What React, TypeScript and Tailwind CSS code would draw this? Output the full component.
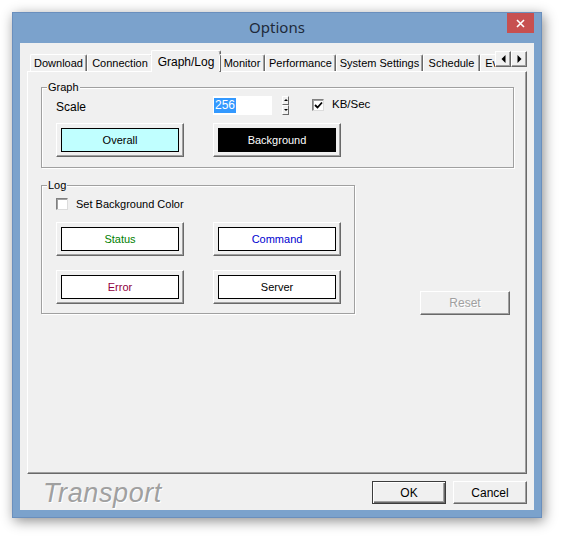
import React from 'react';

const raised =
  'border border-t-white border-l-white border-r-[#696969] border-b-[#696969] shadow-[inset_-1px_-1px_0_#a0a0a0]';

const tabs = [
  { label: 'Download', w: 'w-[57px]' },
  { label: 'Connection', w: 'w-[66px]' },
  { label: 'Graph/Log', w: 'w-[70px]', active: true },
  { label: 'Monitor', w: 'w-[46px]' },
  { label: 'Performance', w: 'w-[71px]' },
  { label: 'System Settings', w: 'w-[87px]' },
  { label: 'Schedule', w: 'w-[57px]' },
  { label: 'Events', w: 'w-[44px]' },
];

function GroupBox({ label, className, children }: { label: string; className: string; children: React.ReactNode }) {
  return (
    <div className={`relative border border-[#a0a0a0] shadow-[inset_1px_1px_0_#fff,1px_1px_0_#fff] ${className}`}>
      {/* caption sits on the etched line */}
      <span className="absolute -top-[8px] left-[5px] bg-[#f0f0f0] px-[1px] leading-[14px]">{label}</span>
      {children}
    </div>
  );
}

function ColorButton({ label, inner }: { label: string; inner: string }) {
  return (
    <button className={`w-[128px] h-[34px] bg-[#f0f0f0] p-[4px] ${raised}`}>
      <div className={`h-full border border-black flex items-center justify-center ${inner}`}>{label}</div>
    </button>
  );
}

function CheckBox({ checked }: { checked?: boolean }) {
  return (
    <div className="w-[12px] h-[12px] bg-white border border-t-[#808080] border-l-[#808080] border-r-[#dcdcdc] border-b-[#dcdcdc] shadow-[inset_1px_1px_0_#a0a0a0] flex items-center justify-center">
      {checked && (
        <svg width="9" height="9" viewBox="0 0 9 9">
          <path d="M1 4 L3.5 6.5 L8 1.5" stroke="#000" strokeWidth="1.8" fill="none" />
        </svg>
      )}
    </div>
  );
}

function Arrow({ dir }: { dir: 'left' | 'right' }) {
  return (
    <div className={`w-[16px] h-[16px] bg-[#f0f0f0] flex items-center justify-center ${raised}`}>
      <svg width="5" height="8" viewBox="0 0 5 8">
        <path d={dir === 'left' ? 'M4.5 0 L0.5 4 L4.5 8 Z' : 'M0.5 0 L4.5 4 L0.5 8 Z'} fill="#000" />
      </svg>
    </div>
  );
}

export default function App() {
  return (
    <div className="w-[563px] h-[538px] bg-white p-[12px] text-[11px] text-black" style={{ fontFamily: '"Liberation Sans", Arial, sans-serif' }}>
      <div className="w-[530px] h-[506px] bg-[#7ba2cc] border border-[#6a8fbd] shadow-[2px_3px_12px_rgba(0,0,0,0.45)] flex flex-col px-[7px] pb-[7px]">
        {/* Title bar */}
        <div className="h-[30px] relative flex items-center justify-center">
          <span className="text-[15px] text-[#1e2a3a] pb-[2px]" style={{ fontFamily: '"Noto Sans", "Open Sans", sans-serif' }}>
            Options
          </span>
          <div className="absolute top-0 right-0 w-[27px] h-[20px] bg-[#c75050] flex items-center justify-center">
            <svg width="9" height="9" viewBox="0 0 9 9">
              <path d="M1 1 L8 8 M8 1 L1 8" stroke="#fff" strokeWidth="1.6" />
            </svg>
          </div>
        </div>

        {/* Client area */}
        <div className="flex-1 bg-[#f0f0f0] px-[7px] pt-[7px] flex flex-col">
          {/* Tab strip */}
          <div className="relative z-10 flex items-start h-[22px]">
            <div className="w-[468px] h-[22px] overflow-hidden flex items-end pl-[3px]">
              {tabs.map((t) =>
                t.active ? (
                  <div
                    key={t.label}
                    className={`${t.w} shrink-0 -mx-[2px] h-[22px] bg-[#f0f0f0] border-t border-l border-white border-r border-r-[#696969] shadow-[inset_-1px_0_0_#a0a0a0] rounded-t-[2px] flex justify-center pt-[2px] text-[12px]`}
                  >
                    {t.label}
                  </div>
                ) : (
                  <div
                    key={t.label}
                    className={`${t.w} shrink-0 h-[17px] mb-[1px] border-t border-l border-white border-r border-r-[#696969] shadow-[inset_-1px_0_0_#a0a0a0] rounded-t-[2px] flex justify-center items-center whitespace-nowrap overflow-hidden`}
                  >
                    {t.label}
                  </div>
                )
              )}
            </div>
            <div className="flex mt-[1px]">
              <Arrow dir="left" />
              <Arrow dir="right" />
            </div>
          </div>

          {/* Tab page */}
          <div className="-mt-[1px] h-[403px] w-[500px] border border-t-white border-l-white border-r-[#696969] border-b-[#696969] shadow-[inset_-1px_-1px_0_#a0a0a0] pl-[13px] pt-[15px] flex flex-col">
            <GroupBox label="Graph" className="w-[473px] h-[81px] pl-[14px] pt-[7px]">
              <div className="grid grid-cols-[157px_auto] gap-y-[8px]">
                <div className="h-[20px] flex items-center pt-[3px] text-[12px]">Scale</div>
                <div className="h-[20px] flex items-center">
                  <div className="w-[59px] h-[19px] bg-white flex items-center pl-[1px]">
                    <span className="bg-[#3399ff] text-white px-[1px] leading-[15px] text-[12px]">256</span>
                  </div>
                  <div className="ml-[10px] w-[7px] h-[19px] flex flex-col">
                    <div className="flex-1 border border-t-white border-l-white border-r-[#696969] border-b-[#696969] flex items-center justify-center">
                      <div className="w-0 h-0 border-l-[2px] border-r-[2px] border-b-[2px] border-l-transparent border-r-transparent border-b-black" />
                    </div>
                    <div className="flex-1 border border-t-white border-l-white border-r-[#696969] border-b-[#696969] flex items-center justify-center">
                      <div className="w-0 h-0 border-l-[2px] border-r-[2px] border-t-[2px] border-l-transparent border-r-transparent border-t-black" />
                    </div>
                  </div>
                  <div className="ml-[23px]">
                    <CheckBox checked />
                  </div>
                  <span className="ml-[8px] text-[11.5px]">KB/Sec</span>
                </div>
                <ColorButton label="Overall" inner="bg-[#c0ffff] text-black" />
                <ColorButton label="Background" inner="bg-black text-white" />
              </div>
            </GroupBox>

            <div className="flex items-start mt-[17px]">
              <GroupBox label="Log" className="w-[314px] h-[129px] pl-[14px] pt-[12px]">
                <div className="flex items-center h-[12px]">
                  <CheckBox />
                  <span className="ml-[8px] text-[11px]">Set Background Color</span>
                </div>
                <div className="grid grid-cols-[157px_auto] gap-y-[14px] mt-[12px]">
                  <ColorButton label="Status" inner="bg-white text-[#008000]" />
                  <ColorButton label="Command" inner="bg-white text-[#0000d0]" />
                  <ColorButton label="Error" inner="bg-white text-[#900040]" />
                  <ColorButton label="Server" inner="bg-white text-black" />
                </div>
              </GroupBox>
              <button className={`ml-[65px] mt-[106px] w-[90px] h-[24px] bg-[#f0f0f0] text-[12px] text-[#a0a0a0] [text-shadow:1px_1px_0_#fff] ${raised}`}>
                Reset
              </button>
            </div>
          </div>

          {/* Bottom row */}
          <div className="flex items-start mt-[7px]">
            <span className="ml-[16px] -mt-[1px] text-[27px] leading-none italic tracking-[0.6px] text-[#a0a0a0] [text-shadow:1px_1px_0_#fff]">
              Transport
            </span>
            <div className="ml-auto flex gap-[7px]">
              <button className="w-[74px] h-[23px] bg-[#f0f0f0] text-[12px] border border-[#3c3c3c] shadow-[inset_1px_1px_0_#fff,inset_-1px_-1px_0_#696969,inset_-2px_-2px_0_#a0a0a0]">
                OK
              </button>
              <button className={`w-[74px] h-[23px] bg-[#f0f0f0] text-[12px] ${raised}`}>Cancel</button>
            </div>
          </div>
        </div>
      </div>
    </div>
  );
}
